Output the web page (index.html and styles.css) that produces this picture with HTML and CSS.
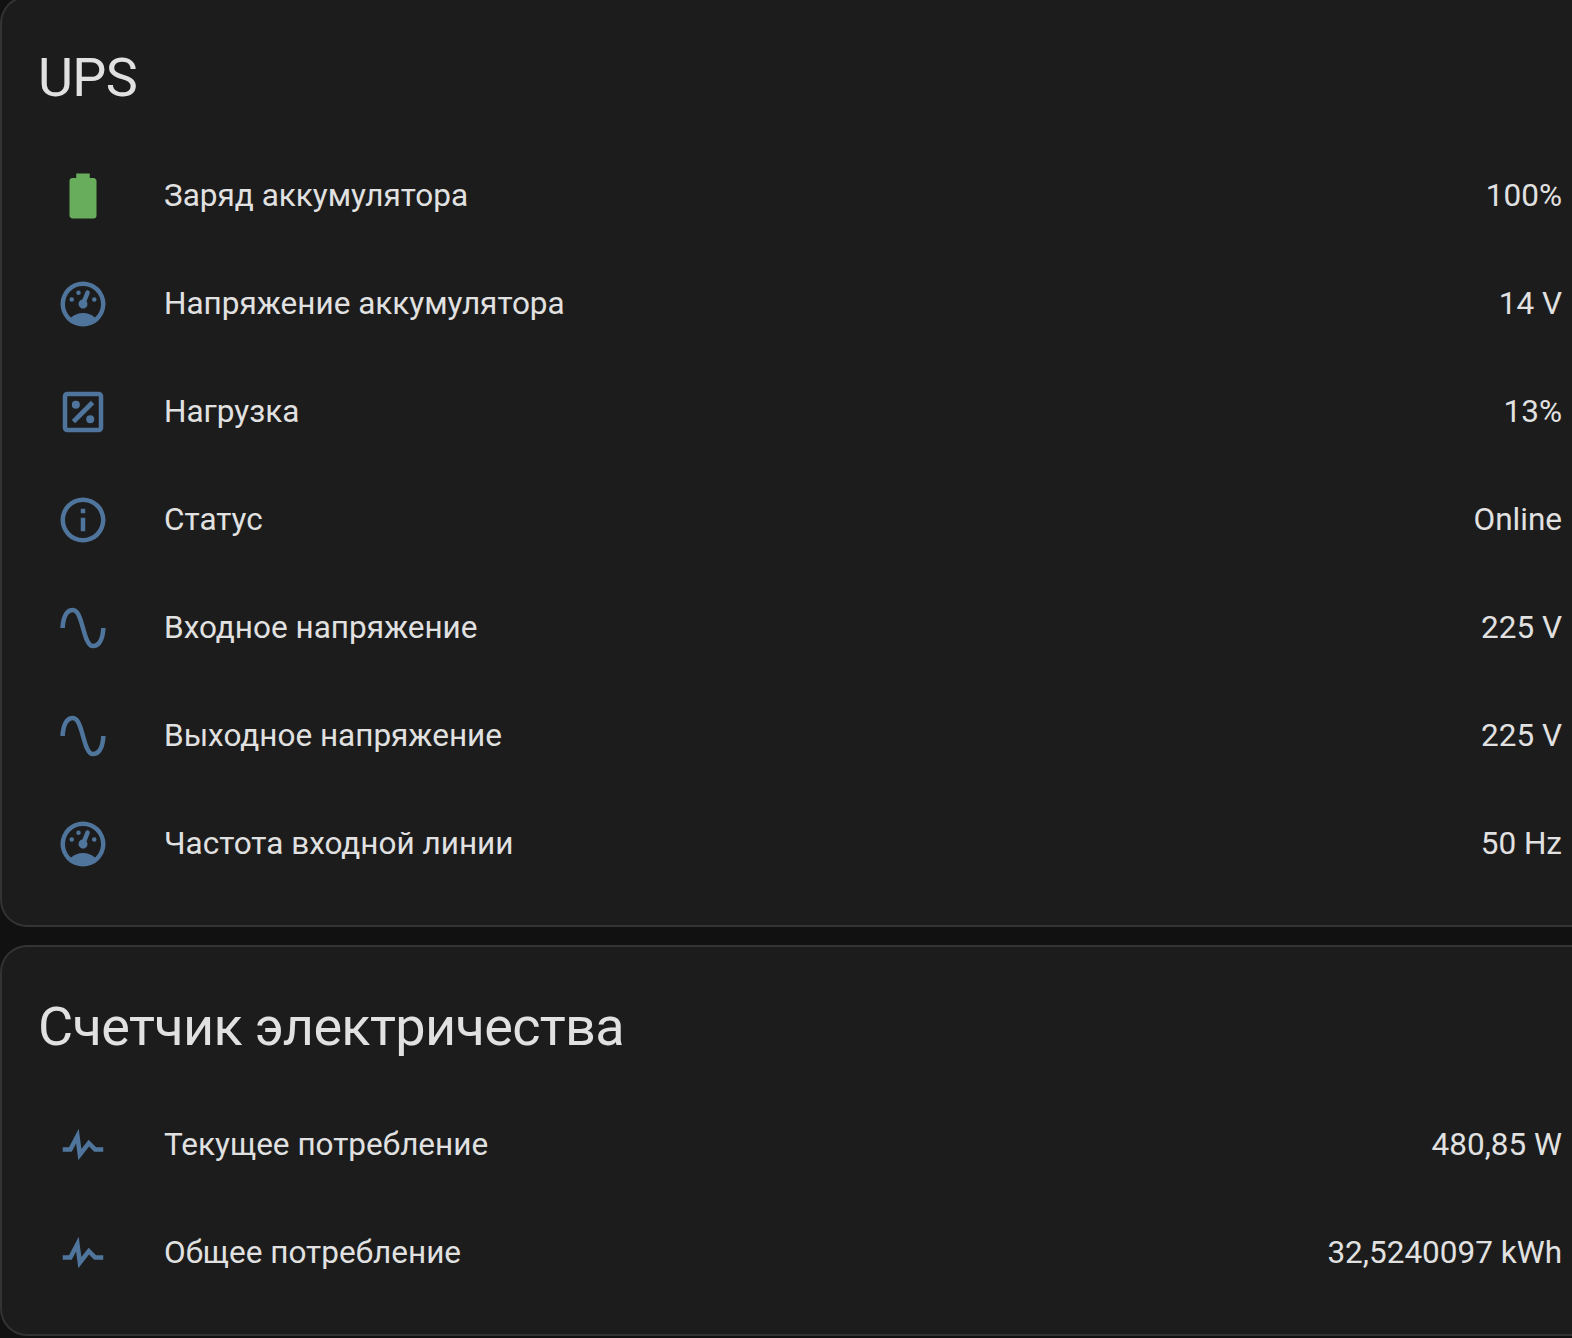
FILE: index.html
```
<!DOCTYPE html>
<html lang="ru">
  <head>
    <meta charset="UTF-8" />
    <meta name="viewport" content="width=device-width, initial-scale=1.0" />
    <title>UPS</title>
    <link rel="stylesheet" href="styles.css">
  </head>
  <body>
    <svg class="sprite" aria-hidden="true">
      <symbol id="battery" viewBox="0 0 24 24">
        <path d="M16.67,4H15V2H9V4H7.33A1.33,1.33 0 0,0 6,5.33V20.67C6,21.4 6.6,22 7.33,22H16.67A1.33,1.33 0 0,0 18,20.67V5.33C18,4.6 17.4,4 16.67,4Z" />
      </symbol>
      <symbol id="gauge" viewBox="0 0 24 24">
        <path d="M12,2A10,10 0 0,0 2,12A10,10 0 0,0 12,22A10,10 0 0,0 22,12A10,10 0 0,0 12,2M12,4A8,8 0 0,1 20,12C20,14.4 19,16.5 17.3,18C15.9,16.7 14,16 12,16C10,16 8.2,16.7 6.7,18C5,16.5 4,14.4 4,12A8,8 0 0,1 12,4M14,5.89C13.62,5.9 13.26,6.15 13.1,6.54L11.81,9.77L11.71,10C11,10.13 10.41,10.6 10.14,11.26C9.73,12.29 10.23,13.45 11.26,13.86C12.29,14.27 13.45,13.77 13.86,12.74C14.12,12.08 14,11.32 13.57,10.76L13.67,10.5L14.96,7.29L14.97,7.26C15.17,6.75 14.92,6.17 14.41,5.96C14.28,5.91 14.15,5.89 14,5.89M10,6A1,1 0 0,0 9,7A1,1 0 0,0 10,8A1,1 0 0,0 11,7A1,1 0 0,0 10,6M7,9A1,1 0 0,0 6,10A1,1 0 0,0 7,11A1,1 0 0,0 8,10A1,1 0 0,0 7,9M17,9A1,1 0 0,0 16,10A1,1 0 0,0 17,11A1,1 0 0,0 18,10A1,1 0 0,0 17,9Z" />
      </symbol>
      <symbol id="percent" viewBox="0 0 24 24">
        <path fill-rule="evenodd" d="M5,3H19A2,2 0 0,1 21,5V19A2,2 0 0,1 19,21H5A2,2 0 0,1 3,19V5A2,2 0 0,1 5,3M5,5V19H19V5H5Z" />
        <path d="M15.5,7L17,8.5L8.5,17L7,15.5L15.5,7Z" />
        <circle cx="8.82" cy="8.82" r="1.78" />
        <circle cx="15.22" cy="15.22" r="1.78" />
      </symbol>
      <symbol id="info" viewBox="0 0 24 24">
        <path d="M11,9H13V7H11M12,20C7.59,20 4,16.41 4,12C4,7.59 7.59,4 12,4C16.41,4 20,7.59 20,12C20,16.41 16.41,20 12,20M12,2A10,10 0 0,0 2,12A10,10 0 0,0 12,22A10,10 0 0,0 22,12A10,10 0 0,0 12,2M11,17H13V11H11V17Z" />
      </symbol>
      <symbol id="sine" viewBox="0 0 24 24">
        <path d="M16.5,21C13.5,21 12.31,16.76 11.05,12.28C10.14,9.04 9,5 7.5,5C4.11,5 4,11.93 4,12H2C2,11.63 2.06,3 7.5,3C10.5,3 11.71,7.25 12.97,11.74C13.83,14.8 15,19 16.5,19C19.94,19 20.03,12.07 20.03,12H22.03C22.03,12.37 21.97,21 16.5,21Z" />
      </symbol>
      <symbol id="pulse" viewBox="0 0 24 24">
        <path d="M3,13H5.79L10.1,4.79L11.28,13.75L14.5,9.66L17.83,13H21V15H17L14.67,12.67L9.92,18.73L8.94,11.31L7,15H3V13Z" />
      </symbol>
    </svg>

    <div class="cards">
      <section class="card">
        <h1 class="card-header">UPS</h1>
        <div class="states">
          <div class="row">
            <span class="badge"><svg class="icon icon-full"><use href="#battery" /></svg></span>
            <span class="name">Заряд аккумулятора</span>
            <span class="value">100%</span>
          </div>
          <div class="row">
            <span class="badge"><svg class="icon"><use href="#gauge" /></svg></span>
            <span class="name">Напряжение аккумулятора</span>
            <span class="value">14 V</span>
          </div>
          <div class="row">
            <span class="badge"><svg class="icon"><use href="#percent" /></svg></span>
            <span class="name">Нагрузка</span>
            <span class="value">13%</span>
          </div>
          <div class="row">
            <span class="badge"><svg class="icon"><use href="#info" /></svg></span>
            <span class="name">Статус</span>
            <span class="value">Online</span>
          </div>
          <div class="row">
            <span class="badge"><svg class="icon"><use href="#sine" /></svg></span>
            <span class="name">Входное напряжение</span>
            <span class="value">225 V</span>
          </div>
          <div class="row">
            <span class="badge"><svg class="icon"><use href="#sine" /></svg></span>
            <span class="name">Выходное напряжение</span>
            <span class="value">225 V</span>
          </div>
          <div class="row">
            <span class="badge"><svg class="icon"><use href="#gauge" /></svg></span>
            <span class="name">Частота входной линии</span>
            <span class="value">50 Hz</span>
          </div>
        </div>
      </section>

      <section class="card">
        <h1 class="card-header">Счетчик электричества</h1>
        <div class="states">
          <div class="row">
            <span class="badge"><svg class="icon"><use href="#pulse" /></svg></span>
            <span class="name">Текущее потребление</span>
            <span class="value">480,85 W</span>
          </div>
          <div class="row">
            <span class="badge"><svg class="icon"><use href="#pulse" /></svg></span>
            <span class="name">Общее потребление</span>
            <span class="value">32,5240097 kWh</span>
          </div>
        </div>
      </section>
    </div>
  </body>
</html>
```

FILE: styles.css
```
* {
  box-sizing: border-box;
}
body {
  margin: 0;
  background-color: #111111;
  color: #e1e1e1;
  font-family: Roboto, "Noto Sans", sans-serif;
  font-size: 31.5px;
  overflow: hidden;
}
.sprite {
  display: none;
}
.cards {
  display: flex;
  flex-direction: column;
  gap: 18px;
  margin-top: -4px;
}
.card {
  background-color: #1c1c1c;
  border: 2px solid #333333;
  border-right: none;
  border-radius: 27px 0 0 27px;
  padding: 27px 10px 36px 36px;
}
.card-header {
  margin: 0 0 20px;
  font-size: 54px;
  font-weight: 400;
  line-height: 106px;
  letter-spacing: -0.012em;
}
.states {
  display: flex;
  flex-direction: column;
  gap: 18px;
}
.row {
  display: flex;
  align-items: center;
  height: 90px;
}
.badge {
  display: flex;
  align-items: center;
  justify-content: center;
  width: 90px;
  height: 90px;
}
.icon {
  width: 54px;
  height: 54px;
  fill: #50759c;
}
.icon-full {
  fill: #68ad5c;
}
.name,
.value {
  padding-bottom: 2px;
}
.name {
  flex: 1;
  padding-left: 36px;
}
.value {
  text-align: right;
}
```
